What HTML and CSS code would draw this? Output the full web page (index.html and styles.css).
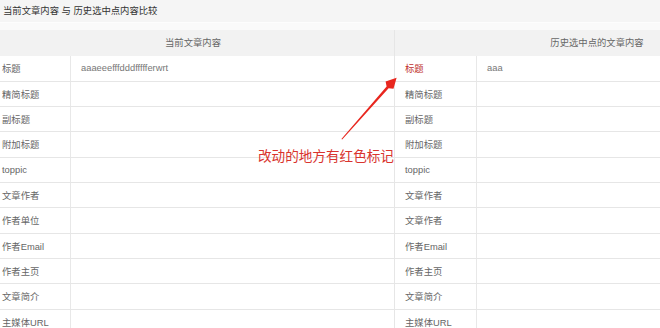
FILE: index.html
```html
<!DOCTYPE html>
<html lang="zh-CN">
<head>
<meta charset="utf-8">
<title>当前文章内容 与 历史选中点内容比较</title>
<link rel="stylesheet" href="styles.css">
</head>
<body>
<div class="page">
  <div class="title">当前文章内容 与 历史选中点内容比较</div>
  <div class="spacer"></div>
  <div class="compare">
    <div class="cmp cmp-left">
      <div class="head">当前文章内容</div>
      <div class="row"><div class="lbl">标题</div><div class="val">aaaeeefffdddffffferwrt</div></div>
      <div class="row"><div class="lbl">精简标题</div><div class="val"></div></div>
      <div class="row"><div class="lbl">副标题</div><div class="val"></div></div>
      <div class="row"><div class="lbl">附加标题</div><div class="val"></div></div>
      <div class="row"><div class="lbl">toppic</div><div class="val"></div></div>
      <div class="row"><div class="lbl">文章作者</div><div class="val"></div></div>
      <div class="row"><div class="lbl">作者单位</div><div class="val"></div></div>
      <div class="row"><div class="lbl">作者Email</div><div class="val"></div></div>
      <div class="row"><div class="lbl">作者主页</div><div class="val"></div></div>
      <div class="row"><div class="lbl">文章简介</div><div class="val"></div></div>
      <div class="row"><div class="lbl">主媒体URL</div><div class="val"></div></div>
    </div>
    <div class="cmp cmp-right">
      <div class="head">历史选中点的文章内容</div>
      <div class="row"><div class="lbl changed">标题</div><div class="val">aaa</div></div>
      <div class="row"><div class="lbl">精简标题</div><div class="val"></div></div>
      <div class="row"><div class="lbl">副标题</div><div class="val"></div></div>
      <div class="row"><div class="lbl">附加标题</div><div class="val"></div></div>
      <div class="row"><div class="lbl">toppic</div><div class="val"></div></div>
      <div class="row"><div class="lbl">文章作者</div><div class="val"></div></div>
      <div class="row"><div class="lbl">文章作者</div><div class="val"></div></div>
      <div class="row"><div class="lbl">作者Email</div><div class="val"></div></div>
      <div class="row"><div class="lbl">作者主页</div><div class="val"></div></div>
      <div class="row"><div class="lbl">文章简介</div><div class="val"></div></div>
      <div class="row"><div class="lbl">主媒体URL</div><div class="val"></div></div>
    </div>
  </div>

  <svg class="arrow" width="660" height="328" viewBox="0 0 660 328" aria-hidden="true">
    <polygon fill="#e8261e" points="341.4,138.9 342.2,139.4 388.6,88.2 393.5,88.8 396.6,77.8 385.6,81.6 386.6,86.4"/>
  </svg>
  <div class="note">改动的地方有红色标记</div>
</div>
</body>
</html>
```
FILE: styles.css
```css
html, body {
  margin: 0;
  padding: 0;
  background: #fff;
}
body {
  width: 660px;
  height: 328px;
  overflow: hidden;
  font-family: "Liberation Sans", "Noto Sans CJK SC", sans-serif;
}
.page {
  position: relative;
  width: 660px;
  height: 328px;
  overflow: hidden;
}
.title {
  height: 23px;
  line-height: 22px;
  padding-left: 3px;
  background: #f5f5f5;
  border-bottom: 1px solid #fdfdfd;
  box-sizing: border-box;
  font-size: 9.33px;
  color: #333;
}
.spacer {
  height: 7px;
  background: #fafafa;
}
.compare {
  display: flex;
  margin-left: -8px;
  width: 820px;
}
.cmp {
  flex: none;
}
.cmp-left {
  width: 403px;
  border-right: 1px solid #e6e6e6;
  box-sizing: border-box;
}
.cmp-right {
  width: 404px;
}
.head {
  height: 26.33px;
  line-height: 26px;
  background: #f2f2f2;
  text-align: center;
  font-size: 9.33px;
  color: #666;
}
.row {
  display: grid;
  height: 25.33px;
  border-bottom: 1px solid #e6e6e6;
  box-sizing: border-box;
  font-size: 9.33px;
  color: #666;
}
.cmp-left .row {
  grid-template-columns: 79px 1fr;
}
.cmp-right .row {
  grid-template-columns: 82px 1fr;
}
.lbl {
  padding-left: 10px;
  border-right: 1px solid #e8e8e8;
  display: flex;
  align-items: center;
  white-space: nowrap;
}
.lbl.changed {
  color: #c0302c;
}
.val {
  padding-left: 10px;
  display: flex;
  align-items: center;
  white-space: nowrap;
  color: #777;
}
.arrow {
  position: absolute;
  left: 0;
  top: 0;
  pointer-events: none;
}
.note {
  position: absolute;
  left: 258px;
  top: 148px;
  font-size: 13.6px;
  line-height: 18px;
  color: #d9342e;
  white-space: nowrap;
}
```
